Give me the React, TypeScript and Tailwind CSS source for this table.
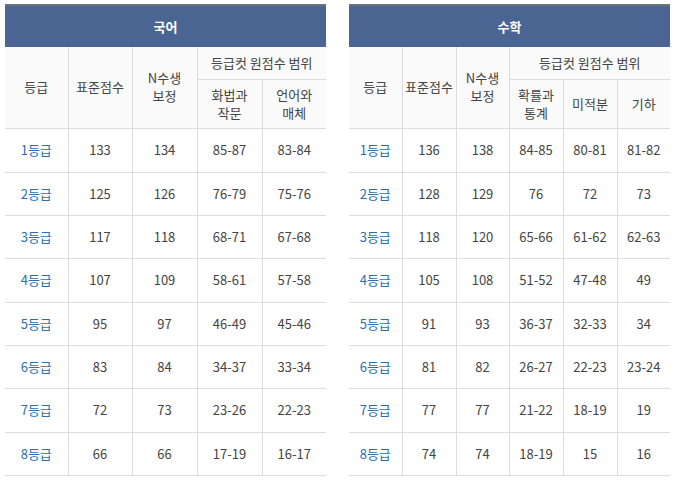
const korean = [
  ["1등급", "133", "134", "85-87", "83-84"],
  ["2등급", "125", "126", "76-79", "75-76"],
  ["3등급", "117", "118", "68-71", "67-68"],
  ["4등급", "107", "109", "58-61", "57-58"],
  ["5등급", "95", "97", "46-49", "45-46"],
  ["6등급", "83", "84", "34-37", "33-34"],
  ["7등급", "72", "73", "23-26", "22-23"],
  ["8등급", "66", "66", "17-19", "16-17"],
];

const math = [
  ["1등급", "136", "138", "84-85", "80-81", "81-82"],
  ["2등급", "128", "129", "76", "72", "73"],
  ["3등급", "118", "120", "65-66", "61-62", "62-63"],
  ["4등급", "105", "108", "51-52", "47-48", "49"],
  ["5등급", "91", "93", "36-37", "32-33", "34"],
  ["6등급", "81", "82", "26-27", "22-23", "23-24"],
  ["7등급", "77", "77", "21-22", "18-19", "19"],
  ["8등급", "74", "74", "18-19", "15", "16"],
];

const rowHeights = [44, 43, 43, 44, 43, 43, 44, 43];

const cell = "border-b border-r border-[#dddddd] text-center align-middle p-0";

function ScoreTable({
  title,
  widths,
  subjects,
  rows,
}: {
  title: string;
  widths: number[];
  subjects: string[][];
  rows: string[][];
}) {
  return (
    <table className="w-[321px] table-fixed border-collapse text-[13px] leading-[18px] text-[#444444]">
      <colgroup>
        {widths.map((w, i) => (
          <col key={i} style={{ width: w }} />
        ))}
      </colgroup>
      <thead>
        <tr>
          <th
            colSpan={widths.length}
            className="h-[42px] border-t-2 border-[#6b6f78] bg-[#4b6593] p-0 text-center text-[13px] font-bold text-white"
          >
            {title}
          </th>
        </tr>
        <tr className="bg-[#fafafa]">
          <th rowSpan={2} className={`${cell} font-normal`}>등급</th>
          <th rowSpan={2} className={`${cell} font-normal`}>표준점수</th>
          <th rowSpan={2} className={`${cell} font-normal`}>
            N수생
            <br />
            보정
          </th>
          <th
            colSpan={subjects.length}
            className="h-[32px] border-b border-[#dddddd] p-0 text-center font-normal"
          >
            등급컷 원점수 범위
          </th>
        </tr>
        <tr className="bg-[#fafafa]">
          {subjects.map((s, i) => (
            <th
              key={i}
              className={`h-[49px] border-b border-[#dddddd] p-0 text-center font-normal ${
                i < subjects.length - 1 ? "border-r" : ""
              }`}
            >
              {s.map((line, j) => (
                <div key={j}>{line}</div>
              ))}
            </th>
          ))}
        </tr>
      </thead>
      <tbody>
        {rows.map((r, ri) => (
          <tr key={ri} style={{ height: rowHeights[ri] }}>
            {r.map((v, ci) => (
              <td
                key={ci}
                className={`border-b border-[#dddddd] p-0 text-center ${
                  ci < r.length - 1 ? "border-r" : ""
                } ${ci === 0 ? "text-[#2b6fae]" : ""}`}
              >
                {v}
              </td>
            ))}
          </tr>
        ))}
      </tbody>
    </table>
  );
}

export default function App() {
  return (
    <div
      className="flex h-[482px] w-[676px] items-start gap-[23px] bg-white pl-[5px] pt-[4px]"
      style={{ fontFamily: '"Noto Sans CJK KR", "Noto Sans", sans-serif' }}
    >
      <ScoreTable
        title="국어"
        widths={[63, 64, 65, 65, 64]}
        subjects={[["화법과", "작문"], ["언어와", "매체"]]}
        rows={korean}
      />
      <ScoreTable
        title="수학"
        widths={[53, 54, 53, 54, 54, 53]}
        subjects={[["확률과", "통계"], ["미적분"], ["기하"]]}
        rows={math}
      />
    </div>
  );
}
